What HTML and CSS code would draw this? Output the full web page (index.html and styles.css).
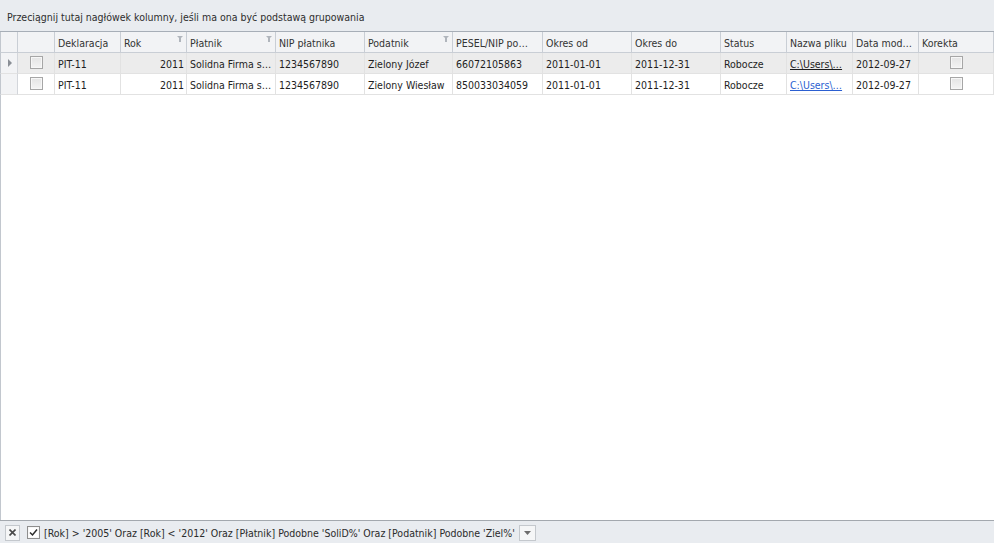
FILE: index.html
```html
<!DOCTYPE html>
<html lang="pl">
<head>
    <meta charset="UTF-8">
    <title>Deklaracje</title>
    <link rel="stylesheet" href="styles.css">
</head>
<body>
    <div class="grid">
        <div class="group-panel">Przeciągnij tutaj nagłówek kolumny, jeśli ma ona być podstawą grupowania</div>

        <div class="row header">
            <div class="cell"></div>
            <div class="cell"></div>
            <div class="cell">Deklaracja</div>
            <div class="cell">Rok<span class="funnel"></span></div>
            <div class="cell">Płatnik<span class="funnel"></span></div>
            <div class="cell">NIP płatnika</div>
            <div class="cell">Podatnik<span class="funnel"></span></div>
            <div class="cell">PESEL/NIP po…</div>
            <div class="cell">Okres od</div>
            <div class="cell">Okres do</div>
            <div class="cell">Status</div>
            <div class="cell">Nazwa pliku</div>
            <div class="cell">Data mod…</div>
            <div class="cell">Korekta</div>
        </div>

        <div class="row data focused">
            <div class="cell indicator"><span class="arrow"></span></div>
            <div class="cell center"><span class="check"></span></div>
            <div class="cell">PIT-11</div>
            <div class="cell right">2011</div>
            <div class="cell">Solidna Firma s…</div>
            <div class="cell">1234567890</div>
            <div class="cell">Zielony Józef</div>
            <div class="cell">66072105863</div>
            <div class="cell">2011-01-01</div>
            <div class="cell">2011-12-31</div>
            <div class="cell">Robocze</div>
            <div class="cell"><span class="link">C:\Users\…</span></div>
            <div class="cell">2012-09-27</div>
            <div class="cell center"><span class="check"></span></div>
        </div>

        <div class="row data">
            <div class="cell indicator"></div>
            <div class="cell center"><span class="check"></span></div>
            <div class="cell">PIT-11</div>
            <div class="cell right">2011</div>
            <div class="cell">Solidna Firma s…</div>
            <div class="cell">1234567890</div>
            <div class="cell">Zielony Wiesław</div>
            <div class="cell">850033034059</div>
            <div class="cell">2011-01-01</div>
            <div class="cell">2011-12-31</div>
            <div class="cell">Robocze</div>
            <div class="cell"><span class="link">C:\Users\…</span></div>
            <div class="cell">2012-09-27</div>
            <div class="cell center"><span class="check"></span></div>
        </div>

        <div class="empty"></div>

        <div class="filter-panel">
            <span class="close-btn">
                <svg width="7" height="7" viewBox="0 0 7 7"><path d="M0.5 0.5 L6.5 6.5 M6.5 0.5 L0.5 6.5" stroke="#4a4a4a" stroke-width="1.6"/></svg>
            </span>
            <span class="check checked">
                <svg width="9" height="9" viewBox="0 0 9 9"><path d="M1 4.5 L3.5 7 L8 1.5" fill="none" stroke="#2b2b2b" stroke-width="1.5"/></svg>
            </span>
            <span class="filter-text">[Rok] &gt; '2005' Oraz [Rok] &lt; '2012' Oraz [Płatnik] Podobne 'SoliD%' Oraz [Podatnik] Podobne 'Ziel%'</span>
            <span class="drop-btn">
                <svg width="7" height="4" viewBox="0 0 7 4"><path d="M0 0 H7 L3.5 4 Z" fill="#6d6d6d"/></svg>
            </span>
        </div>
    </div>
</body>
</html>
```

FILE: styles.css
```css
body {
    margin: 0;
    font-family: 'DejaVu Sans Condensed', 'Liberation Sans', Arial, sans-serif;
    font-size: 10.5px;
    line-height: 12px;
    color: #1e1e1e;
    background-color: #fff;
}

.grid {
    width: 994px;
    height: 543px;
    display: flex;
    flex-direction: column;
    overflow: hidden;
}

.group-panel {
    height: 32px;
    box-sizing: border-box;
    padding: 11px 0 0 7px;
    background-color: #e9ecf0;
    color: #2e2e2e;
    border-bottom: 1px solid #a7aeb7;
}

.row {
    display: grid;
    grid-template-columns: 18px 37px 66px 66px 89px 89px 88px 90px 89px 89px 66px 66px 66px 75px;
    height: 21px;
}

.cell {
    box-sizing: border-box;
    border-right: 1px solid #dcdfe3;
    border-bottom: 1px solid #dcdfe3;
    padding: 5px 0 0 3px;
    white-space: nowrap;
    overflow: hidden;
    position: relative;
}

.row .cell:first-child {
    border-left: 1px solid #c2c7ce;
}

.header {
    background-color: #f2f3f5;
    color: #333;
}

.header .cell {
    border-right-color: #c9ced5;
    border-bottom-color: #c9ced5;
}

.data .cell {
    border-right-color: #e2e2e2;
    border-bottom-color: #e2e2e2;
}

.data .indicator {
    background-color: #f2f3f5;
    border-right-color: #d3d6db;
}

.focused {
    background-color: #ececec;
}

.right {
    text-align: right;
    padding-right: 2px;
}

.center {
    display: flex;
    justify-content: center;
    padding: 3px 0 0 0;
}

.funnel {
    position: absolute;
    right: 3px;
    top: 4px;
    width: 0;
    height: 0;
    border-left: 3px solid transparent;
    border-right: 3px solid transparent;
    border-top: 3px solid #b0b5bc;
}

.funnel::after {
    content: "";
    position: absolute;
    left: -1px;
    top: -1px;
    width: 2px;
    height: 4px;
    background-color: #b0b5bc;
}

.arrow {
    position: absolute;
    left: 7px;
    top: 6px;
    width: 0;
    height: 0;
    border-top: 4px solid transparent;
    border-bottom: 4px solid transparent;
    border-left: 4px solid #8a8f96;
}

.check {
    display: inline-flex;
    align-items: center;
    justify-content: center;
    width: 13px;
    height: 13px;
    box-sizing: border-box;
    border: 1px solid #a6a6a6;
    background: linear-gradient(#e4e4e4, #f4f4f4);
    box-shadow: inset 0 0 0 1px #f7f7f7;
}

.link {
    text-decoration: underline;
    color: #1e1e1e;
}

.data:not(.focused) .link {
    color: #2b5fd1;
}

.empty {
    flex: 1;
    border-left: 1px solid #c2c7ce;
}

.filter-panel {
    height: 23px;
    box-sizing: border-box;
    border-top: 1px solid #a3a8ae;
    background-color: #e9ecf0;
    display: flex;
    align-items: center;
    padding: 1px 0 0 5px;
    gap: 6px;
}

.close-btn,
.drop-btn {
    display: inline-flex;
    align-items: center;
    justify-content: center;
    height: 16px;
    box-sizing: border-box;
    border: 1px solid #c4c8cd;
    background-color: #f5f6f7;
}

.close-btn {
    width: 15px;
}

.filter-panel .check {
    background: #fff;
    border-color: #8e8e8e;
    margin-left: 1px;
    margin-right: -2px;
}

.filter-text {
    color: #2b2b2b;
}

.drop-btn {
    width: 17px;
    margin-left: -2px;
}
```
